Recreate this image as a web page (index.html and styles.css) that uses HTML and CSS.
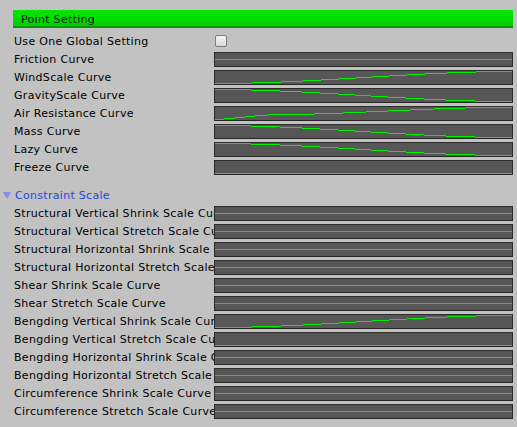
FILE: index.html
```html
<!DOCTYPE html>
<html>
<head>
<meta charset="utf-8">
<link rel="stylesheet" href="styles.css">
</head>
<body>
<div class="inspector">
  <div class="header">Point Setting</div>
  <div class="rows">
    <div class="row"><div class="label">Use One Global Setting</div><div class="check"></div></div>
    <div class="row"><div class="label">Friction Curve</div><div class="field"><svg viewBox="0 0 297 13" class="curve"><path d="M0 6.5H297"/></svg></div></div>
    <div class="row"><div class="label">WindScale Curve</div><div class="field"><svg viewBox="0 0 297 13" class="curve"><path d="M0 12.5H37M37 11.5H66M66 10.5H88M88 9.5H106M106 8.5H124M124 7.5H141M141 6.5H157M157 5.5H174M174 4.5H192M192 3.5H210M210 2.5H232M232 1.5H261M261 0.5H297"/></svg></div></div>
    <div class="row"><div class="label">GravityScale Curve</div><div class="field"><svg viewBox="0 0 297 13" class="curve"><path d="M0 0.5H36M36 1.5H65M65 2.5H87M87 3.5H105M105 4.5H123M123 5.5H140M140 6.5H156M156 7.5H173M173 8.5H191M191 9.5H209M209 10.5H231M231 11.5H260M260 12.5H297"/></svg></div></div>
    <div class="row"><div class="label">Air Resistance Curve</div><div class="field"><svg viewBox="0 0 297 13" class="curve"><path d="M0 12.5H9M9 11.5H20M20 10.5H30M30 9.5H40M40 8.5H53M53 7.5H99M99 6.5H128M128 5.5H151M151 4.5H173M173 3.5H195M195 2.5H219M219 1.5H250M250 0.5H297"/></svg></div></div>
    <div class="row"><div class="label">Mass Curve</div><div class="field"><svg viewBox="0 0 297 13" class="curve"><path d="M0 0.5H36M36 1.5H65M65 2.5H87M87 3.5H105M105 4.5H123M123 5.5H140M140 6.5H156M156 7.5H173M173 8.5H191M191 9.5H209M209 10.5H231M231 11.5H260M260 12.5H297"/></svg></div></div>
    <div class="row"><div class="label">Lazy Curve</div><div class="field"><svg viewBox="0 0 297 13" class="curve"><path d="M0 0.5H36M36 1.5H65M65 2.5H87M87 3.5H105M105 4.5H123M123 5.5H140M140 6.5H156M156 7.5H173M173 8.5H191M191 9.5H209M209 10.5H231M231 11.5H260M260 12.5H297"/></svg></div></div>
    <div class="row"><div class="label">Freeze Curve</div><div class="field"><svg viewBox="0 0 297 13" class="curve"><path d="M0 12.5H297"/></svg></div></div>
  </div>
  <div class="foldout"><span class="tri"></span><span class="foldout-label">Constraint Scale</span></div>
  <div class="rows">
    <div class="row"><div class="label">Structural Vertical Shrink Scale Curve</div><div class="field"><svg viewBox="0 0 297 13" class="curve"><path d="M0 6.5H297"/></svg></div></div>
    <div class="row"><div class="label">Structural Vertical Stretch Scale Curve</div><div class="field"><svg viewBox="0 0 297 13" class="curve"><path d="M0 6.5H297"/></svg></div></div>
    <div class="row"><div class="label">Structural Horizontal Shrink Scale Curve</div><div class="field"><svg viewBox="0 0 297 13" class="curve"><path d="M0 6.5H297"/></svg></div></div>
    <div class="row"><div class="label">Structural Horizontal Stretch Scale Curve</div><div class="field"><svg viewBox="0 0 297 13" class="curve"><path d="M0 6.5H297"/></svg></div></div>
    <div class="row"><div class="label">Shear Shrink Scale Curve</div><div class="field"><svg viewBox="0 0 297 13" class="curve"><path d="M0 6.5H297"/></svg></div></div>
    <div class="row"><div class="label">Shear Stretch Scale Curve</div><div class="field"><svg viewBox="0 0 297 13" class="curve"><path d="M0 6.5H297"/></svg></div></div>
    <div class="row"><div class="label">Bengding Vertical Shrink Scale Curve</div><div class="field"><svg viewBox="0 0 297 13" class="curve"><path d="M0 12.5H37M37 11.5H66M66 10.5H88M88 9.5H106M106 8.5H124M124 7.5H141M141 6.5H157M157 5.5H174M174 4.5H192M192 3.5H210M210 2.5H232M232 1.5H261M261 0.5H297"/></svg></div></div>
    <div class="row"><div class="label">Bengding Vertical Stretch Scale Curve</div><div class="field"><svg viewBox="0 0 297 13" class="curve"><path d="M0 12.5H297"/></svg></div></div>
    <div class="row"><div class="label">Bengding Horizontal Shrink Scale Curve</div><div class="field"><svg viewBox="0 0 297 13" class="curve"><path d="M0 6.5H297"/></svg></div></div>
    <div class="row"><div class="label">Bengding Horizontal Stretch Scale Curve</div><div class="field"><svg viewBox="0 0 297 13" class="curve"><path d="M0 6.5H297"/></svg></div></div>
    <div class="row"><div class="label">Circumference Shrink Scale Curve</div><div class="field"><svg viewBox="0 0 297 13" class="curve"><path d="M0 6.5H297"/></svg></div></div>
    <div class="row"><div class="label">Circumference Stretch Scale Curve</div><div class="field"><svg viewBox="0 0 297 13" class="curve"><path d="M0 6.5H297"/></svg></div></div>
  </div>
</div>
</body>
</html>
```

FILE: styles.css
```css
html, body {
  margin: 0;
  padding: 0;
  background: #c2c2c2;
}
body {
  font-family: "DejaVu Sans", Verdana, sans-serif;
  font-size: 11px;
  letter-spacing: 0.3px;
  color: #000;
}
.inspector {
  padding-top: 10px;
}
.header {
  margin-left: 13px;
  width: 500px;
  height: 18px;
  box-sizing: border-box;
  background: linear-gradient(#00e800, #00cf00);
  border-bottom: 2px solid #009a00;
  padding-left: 8px;
  padding-top: 2px;
  line-height: 16px;
  color: #111;
  margin-bottom: 4px;
}
.rows {
  display: flex;
  flex-direction: column;
  padding-left: 14px;
}
.row {
  display: flex;
  height: 18px;
  align-items: center;
}
.label {
  width: 200px;
  height: 18px;
  box-sizing: border-box;
  padding-top: 1px;
  flex: none;
  white-space: nowrap;
  overflow: hidden;
  line-height: 17px;
}
.check {
  width: 12px;
  height: 12px;
  box-sizing: border-box;
  margin-left: 1px;
  border: 1px solid #7c7c7c;
  border-radius: 2px;
  background: linear-gradient(#f6f6f6, #dadada);
}
.field {
  width: 299px;
  height: 15px;
  box-sizing: border-box;
  border: 1px solid #2c2c2c;
  border-bottom-color: #262626;
  background: #565656;
  margin-top: 1px;
}
.curve {
  display: block;
  width: 297px;
  height: 13px;
  fill: none;
  stroke: #00f000;
  stroke-width: 1;
  shape-rendering: crispEdges;
}
.foldout {
  margin-top: 10px;
  height: 18px;
  display: flex;
  align-items: center;
  padding-left: 3px;
}
.tri {
  width: 0;
  height: 0;
  border-left: 4px solid transparent;
  border-right: 4px solid transparent;
  border-top: 7px solid #8192e2;
  margin-right: 4px;
  margin-top: 1px;
}
.foldout-label {
  color: #2448dc;
  line-height: 18px;
  padding-top: 1px;
}
```
